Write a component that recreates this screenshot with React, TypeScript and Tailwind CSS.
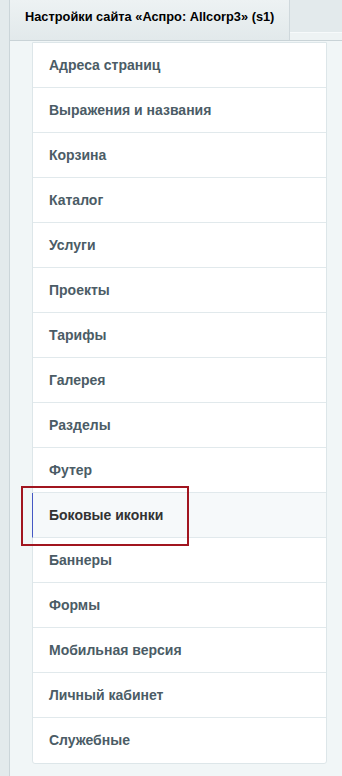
import React from "react";

const items = [
  "Адреса страниц",
  "Выражения и названия",
  "Корзина",
  "Каталог",
  "Услуги",
  "Проекты",
  "Тарифы",
  "Галерея",
  "Разделы",
  "Футер",
  "Боковые иконки",
  "Баннеры",
  "Формы",
  "Мобильная версия",
  "Личный кабинет",
  "Служебные",
];

export default function App() {
  return (
    <div
      className="relative w-[342px] h-[776px] overflow-hidden bg-[#e3eaec] pl-[9px]"
      style={{ fontFamily: '"Liberation Sans", Arial, sans-serif' }}
    >
      <div className="h-full border-l border-[#cbd5d9] flex flex-col">
        <div className="flex h-[41px] border-b border-[#c9d3d7]">
          <div className="w-[280px] h-full bg-gradient-to-b from-[#edf2f3] to-[#e2e9eb] border-r border-[#cfd8dc] flex items-start pt-[10px] pl-[15px]">
            <span className="text-[12.8px] font-bold text-[#000] leading-[14px] whitespace-nowrap">
              Настройки сайта «Аспро: Allcorp3» (s1)
            </span>
          </div>
          <div className="flex-1 flex flex-col">
            <div className="h-[33px] bg-[#e3eaec] border-b border-[#f7fafb]" />
            <div className="flex-1 bg-[#eef3f4]" />
          </div>
        </div>
        <div className="flex-1 bg-[#f1f6f7] pl-[22px] pr-[15px] pt-[1px]">
          <div className="bg-white border border-[#dde6e9] rounded-b-[3px]">
            {items.map((t, i) => {
              const active = t === "Боковые иконки";
              return (
                <div
                  key={t}
                  className={
                    "h-[45px] flex items-center text-[14px] font-bold " +
                    (i < items.length - 1 ? "border-b border-[#e1e9ec] " : "") +
                    (active
                      ? "bg-[#f6f9fa] text-[#333333] border-l border-l-[#4558c4] -ml-px pl-[16px]"
                      : "text-[#4b5c66] pl-[16px]")
                  }
                >
                  {t}
                </div>
              );
            })}
          </div>
        </div>
      </div>
      <div className="absolute left-[21px] top-[486px] w-[168px] h-[60px] border-2 border-[#a1151f]" />
    </div>
  );
}
